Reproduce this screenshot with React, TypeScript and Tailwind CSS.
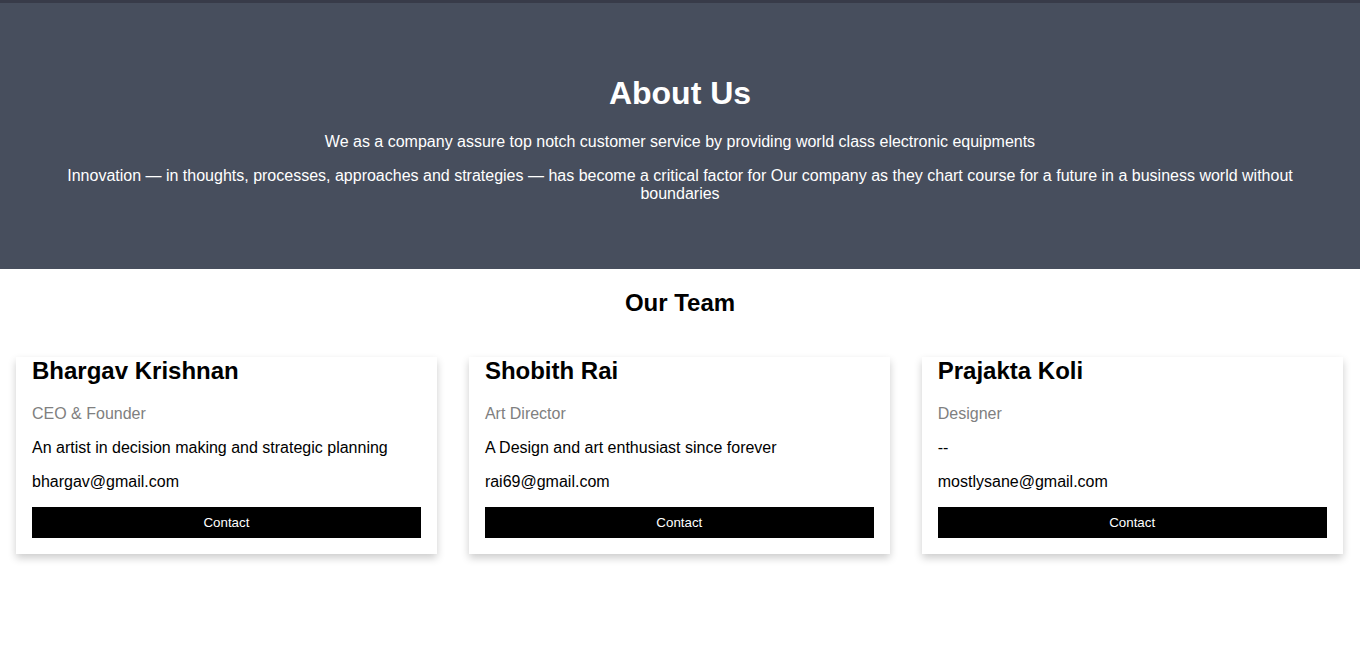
const team = [
  {
    name: "Bhargav Krishnan",
    title: "CEO & Founder",
    bio: "An artist in decision making and strategic planning",
    email: "bhargav@gmail.com",
  },
  {
    name: "Shobith Rai",
    title: "Art Director",
    bio: "A Design and art enthusiast since forever",
    email: "rai69@gmail.com",
  },
  {
    name: "Prajakta Koli",
    title: "Designer",
    bio: "--",
    email: "mostlysane@gmail.com",
  },
];

export default function App() {
  return (
    <div className="min-h-[667px] bg-white font-['Liberation_Sans',Arial,sans-serif] text-base text-black">
      <div className="h-[3px] bg-[#383b49]" />
      <section className="bg-[#474e5d] px-[50px] pt-[51px] pb-[50px] text-center text-white">
        <h1 className="pt-[21px] text-[32px] font-bold leading-[37px]">About Us</h1>
        <p className="mt-[21px] leading-[18px]">
          We as a company assure top notch customer service by providing world class electronic equipments
        </p>
        <p className="mt-4 mb-4 leading-[18px]">
          Innovation — in thoughts, processes, approaches and strategies — has become a critical factor for Our
          company as they chart course for a future in a business world without boundaries
        </p>
      </section>

      <h2 className="mt-5 text-center text-2xl leading-[28px] font-bold">Our Team</h2>

      <div className="mt-8 flex">
        {team.map((m) => (
          <div key={m.name} className="w-[33.3%] px-2">
            <div className="m-2 shadow-[0_4px_8px_0_rgba(0,0,0,0.2)]">
              <div className="px-4 pb-4">
                <h3 className="text-2xl leading-[28px] font-bold">{m.name}</h3>
                <p className="mt-5 leading-[18px] text-[#808080]">{m.title}</p>
                <p className="mt-4 leading-[18px]">{m.bio}</p>
                <p className="mt-4 leading-[18px]">{m.email}</p>
                <button className="mt-4 w-full bg-black p-2 text-[13.33px] leading-[15px] text-white">
                  Contact
                </button>
              </div>
            </div>
          </div>
        ))}
      </div>
    </div>
  );
}
